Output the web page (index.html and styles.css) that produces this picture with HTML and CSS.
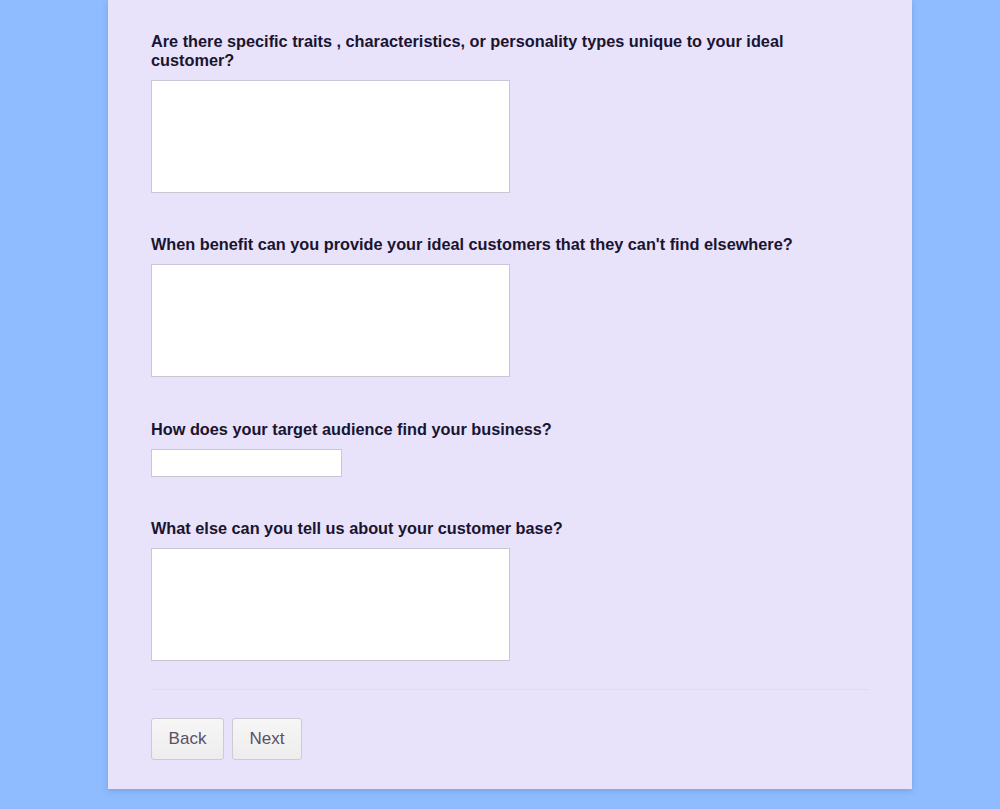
FILE: index.html
```html
<!DOCTYPE html>
<html lang="en">
<head>
<meta charset="utf-8">
<title>Customer form</title>
<link rel="stylesheet" href="styles.css">
</head>
<body>
<main class="card">
  <div class="field">
    <label class="label" for="q1">Are there specific traits , characteristics, or personality types unique to your ideal customer?</label>
    <textarea id="q1" class="area"></textarea>
  </div>
  <div class="field field-wide">
    <label class="label" for="q2">When benefit can you provide your ideal customers that they can't find elsewhere?</label>
    <textarea id="q2" class="area"></textarea>
  </div>
  <div class="field">
    <label class="label" for="q3">How does your target audience find your business?</label>
    <input id="q3" class="text" type="text">
  </div>
  <div class="field field-last">
    <label class="label" for="q4">What else can you tell us about your customer base?</label>
    <textarea id="q4" class="area"></textarea>
  </div>
  <div class="divider"></div>
  <div class="actions">
    <button class="btn back" type="button">Back</button>
    <button class="btn next" type="button">Next</button>
  </div>
</main>
</body>
</html>
```
FILE: styles.css
```css
html, body {
  margin: 0;
  padding: 0;
}
body {
  background: #8fbcff;
  font-family: "Liberation Sans", Arial, sans-serif;
  min-height: 809px;
}
.card {
  box-sizing: border-box;
  width: 804px;
  margin-left: 108px;
  background: #e8e2fa;
  padding: 32px 43px 29px 43px;
  box-shadow: 0 2px 6px rgba(60, 80, 160, 0.25);
  display: flex;
  flex-direction: column;
}
.field {
  display: flex;
  flex-direction: column;
  align-items: flex-start;
  margin-bottom: 42px;
}
.field-wide {
  margin-bottom: 43px;
}
.field-last {
  margin-bottom: 28px;
}
.label {
  font-size: 16.3px;
  font-weight: bold;
  line-height: 19px;
  color: #1a1430;
  margin-bottom: 10px;
  max-width: 660px;
}
.area {
  box-sizing: border-box;
  width: 359px;
  height: 113px;
  border: 1px solid #cbc6d4;
  background: #fff;
  resize: none;
  margin: 0;
  display: block;
}
.text {
  box-sizing: border-box;
  width: 191px;
  height: 28px;
  border: 1px solid #cbc6d4;
  background: #fff;
  margin: 0;
  display: block;
}
.divider {
  height: 1px;
  background: #dfdaec;
  margin-bottom: 28px;
}
.actions {
  display: flex;
  gap: 8px;
}
.btn {
  box-sizing: border-box;
  height: 42px;
  border: 1px solid #cdcad2;
  border-radius: 3px;
  background: linear-gradient(#f6f6f6, #ededed);
  color: #5a5068;
  font-family: "Liberation Sans", Arial, sans-serif;
  font-size: 17px;
  padding: 0;
  margin: 0;
}
.back { width: 73px; }
.next { width: 70px; }
```
